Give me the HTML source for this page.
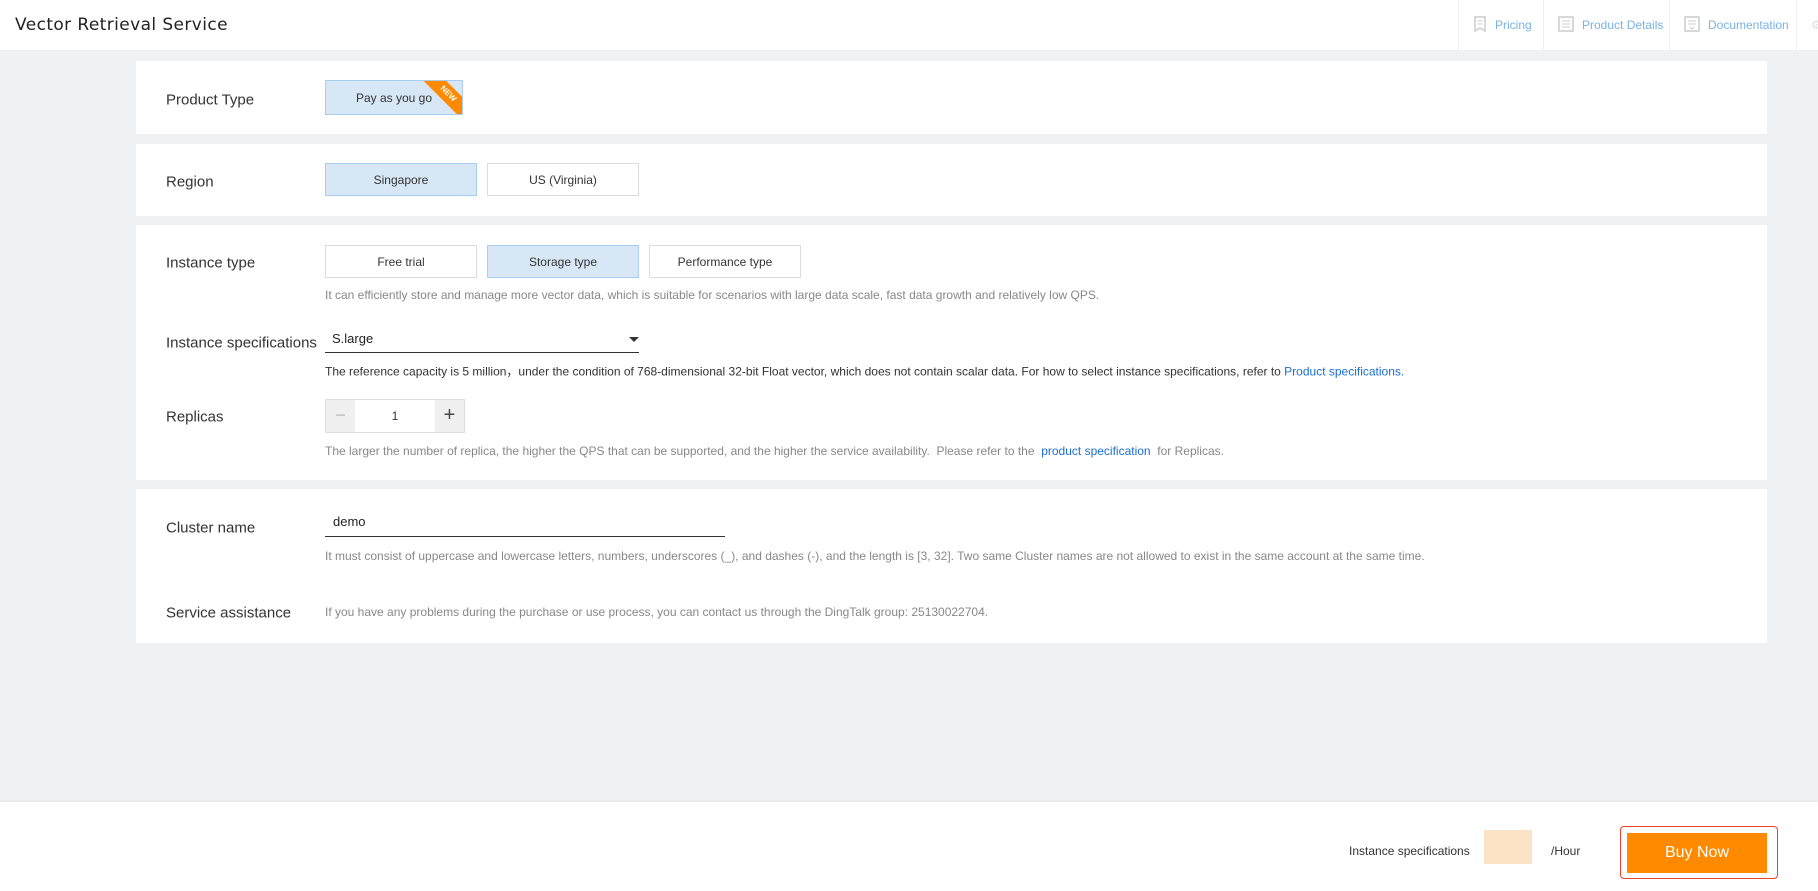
<!DOCTYPE html>
<html><head><meta charset="utf-8"><style>
*{margin:0;padding:0;box-sizing:border-box}
body{width:1818px;height:891px;background:#f0f1f3;font-family:"Liberation Sans",Arial,sans-serif;position:relative;overflow:hidden;color:#333}
.a{position:absolute}
.hdr{left:0;top:0;width:1818px;height:50px;background:#fff}
.title{left:15px;top:15px;color:#222;letter-spacing:.4px;font-family:"DejaVu Sans","Liberation Sans",sans-serif;font-size:17px}
.nav{top:0;height:50px;border-left:1px solid #f0f0f0;color:#7ab2e4;font-size:12px;line-height:50px;padding-left:14px;white-space:nowrap}
.nav svg{vertical-align:-3px;margin-right:8px}
.card{background:#fff;left:136px;width:1631px}
.lbl{font-size:15px;color:#333;left:166px;transform:translateY(-50%)}
.btn{border:1px solid #dcdcdc;background:#fff;font-size:12px;color:#333;text-align:center;display:flex;align-items:center;justify-content:center}
.sel{background:#d7e7f6;border-color:#a9cdee}
.d{font-size:12px;color:#888;left:325px;transform:translateY(-50%);white-space:nowrap}
.d2{color:#333}
a{color:#1b6fcf;text-decoration:none}
</style></head><body>
<div class="a hdr"></div>
<div class="a title">Vector Retrieval Service</div>
<div class="a nav" style="left:1458px;width:88px"><svg width="14" height="16"><path d="M2 1h10v14l-5-3-5 3z" fill="none" stroke="#ccc" stroke-width="1.5"/><path d="M4.5 5h5M4.5 8h5" stroke="#ccc"/></svg>Pricing</div>
<div class="a nav" style="left:1543px;width:128px"><svg width="16" height="16"><rect x="1" y="1" width="14" height="14" fill="none" stroke="#ccc" stroke-width="1.5"/><path d="M4 5h8M4 8h8M4 11h8" stroke="#ccc"/></svg>Product Details</div>
<div class="a nav" style="left:1669px;width:127px"><svg width="16" height="16"><rect x="1" y="1" width="14" height="14" fill="none" stroke="#ccc" stroke-width="1.5"/><path d="M4 5h8M4 8h8M6 11l2 2 2-2" stroke="#ccc" fill="none"/></svg>Documentation</div>
<div class="a nav" style="left:1796px;width:30px;color:#ddd">⚙</div>

<div class="a card" style="top:61px;height:73px"></div>
<div class="a lbl" style="top:100px">Product Type</div>
<div class="a btn sel" style="left:325px;top:80px;width:138px;height:35px;overflow:hidden">Pay as you go
<div class="a" style="right:-18px;top:5px;width:64px;height:16px;background:#ff8a00;transform:rotate(45deg);color:#fff;font-size:8px;font-weight:bold;line-height:16px;text-align:center">NEW</div></div>

<div class="a card" style="top:144px;height:72px"></div>
<div class="a lbl" style="top:182px">Region</div>
<div class="a btn sel" style="left:325px;top:163px;width:152px;height:33px">Singapore</div>
<div class="a btn" style="left:487px;top:163px;width:152px;height:33px">US (Virginia)</div>

<div class="a card" style="top:225px;height:255px"></div>
<div class="a lbl" style="top:263px">Instance type</div>
<div class="a btn" style="left:325px;top:245px;width:152px;height:33px">Free trial</div>
<div class="a btn sel" style="left:487px;top:245px;width:152px;height:33px">Storage type</div>
<div class="a btn" style="left:649px;top:245px;width:152px;height:33px">Performance type</div>
<div class="a d" style="top:295px">It can efficiently store and manage more vector data, which is suitable for scenarios with large data scale, fast data growth and relatively low QPS.</div>
<div class="a lbl" style="top:343px">Instance specifications</div>
<div class="a" style="left:332px;top:331px;font-size:13px;color:#222">S.large</div>
<div class="a" style="left:629px;top:337px;width:0;height:0;border-left:5px solid transparent;border-right:5px solid transparent;border-top:5px solid #333"></div>
<div class="a" style="left:325px;top:352px;width:314px;height:1px;background:#333"></div>
<div class="a d d2" style="top:371px">The reference capacity is 5 million，under the condition of 768-dimensional 32-bit Float vector, which does not contain scalar data. For how to select instance specifications, refer to <a>Product specifications.</a></div>
<div class="a lbl" style="top:417px">Replicas</div>
<div class="a" style="left:325px;top:399px;width:140px;height:34px;border:1px solid #ddd;background:#fff"></div>
<div class="a" style="left:326px;top:400px;width:29px;height:32px;background:#f0f0f0;color:#bbb;text-align:center;line-height:30px;font-size:18px">−</div>
<div class="a" style="left:435px;top:400px;width:29px;height:32px;background:#f0f0f0;color:#444;text-align:center;line-height:30px;font-size:20px">+</div>
<div class="a" style="left:355px;top:409px;width:80px;text-align:center;font-size:12px">1</div>
<div class="a d" style="top:451px">The larger the number of replica, the higher the QPS that can be supported, and the higher the service availability.&nbsp; Please refer to the&nbsp; <a>product specification</a>&nbsp; for Replicas.</div>

<div class="a card" style="top:489px;height:154px"></div>
<div class="a lbl" style="top:528px">Cluster name</div>
<div class="a" style="left:333px;top:514px;font-size:13px;color:#222">demo</div>
<div class="a" style="left:325px;top:536px;width:400px;height:1px;background:#333"></div>
<div class="a d" style="top:556px">It must consist of uppercase and lowercase letters, numbers, underscores (_), and dashes (-), and the length is [3, 32]. Two same Cluster names are not allowed to exist in the same account at the same time.</div>
<div class="a lbl" style="top:613px">Service assistance</div>
<div class="a d" style="top:612px">If you have any problems during the purchase or use process, you can contact us through the DingTalk group: 25130022704.</div>

<div class="a" style="left:0;top:802px;width:1818px;height:89px;background:#fff;box-shadow:0 -1px 3px rgba(0,0,0,.06)"></div>
<div class="a" style="left:1349px;top:844px;font-size:12px;color:#333">Instance specifications</div>
<div class="a" style="left:1484px;top:830px;width:48px;height:34px;background:#fde3c5"></div>
<div class="a" style="left:1551px;top:844px;font-size:12px;color:#333">/Hour</div>
<div class="a" style="left:1620px;top:826px;width:158px;height:53px;border:1px solid #e8442e;border-radius:4px"></div>
<div class="a" style="left:1627px;top:833px;width:140px;height:40px;background:#ff8a00;color:#fff;font-size:16px;text-align:center;line-height:40px">Buy Now</div>
</body></html>
